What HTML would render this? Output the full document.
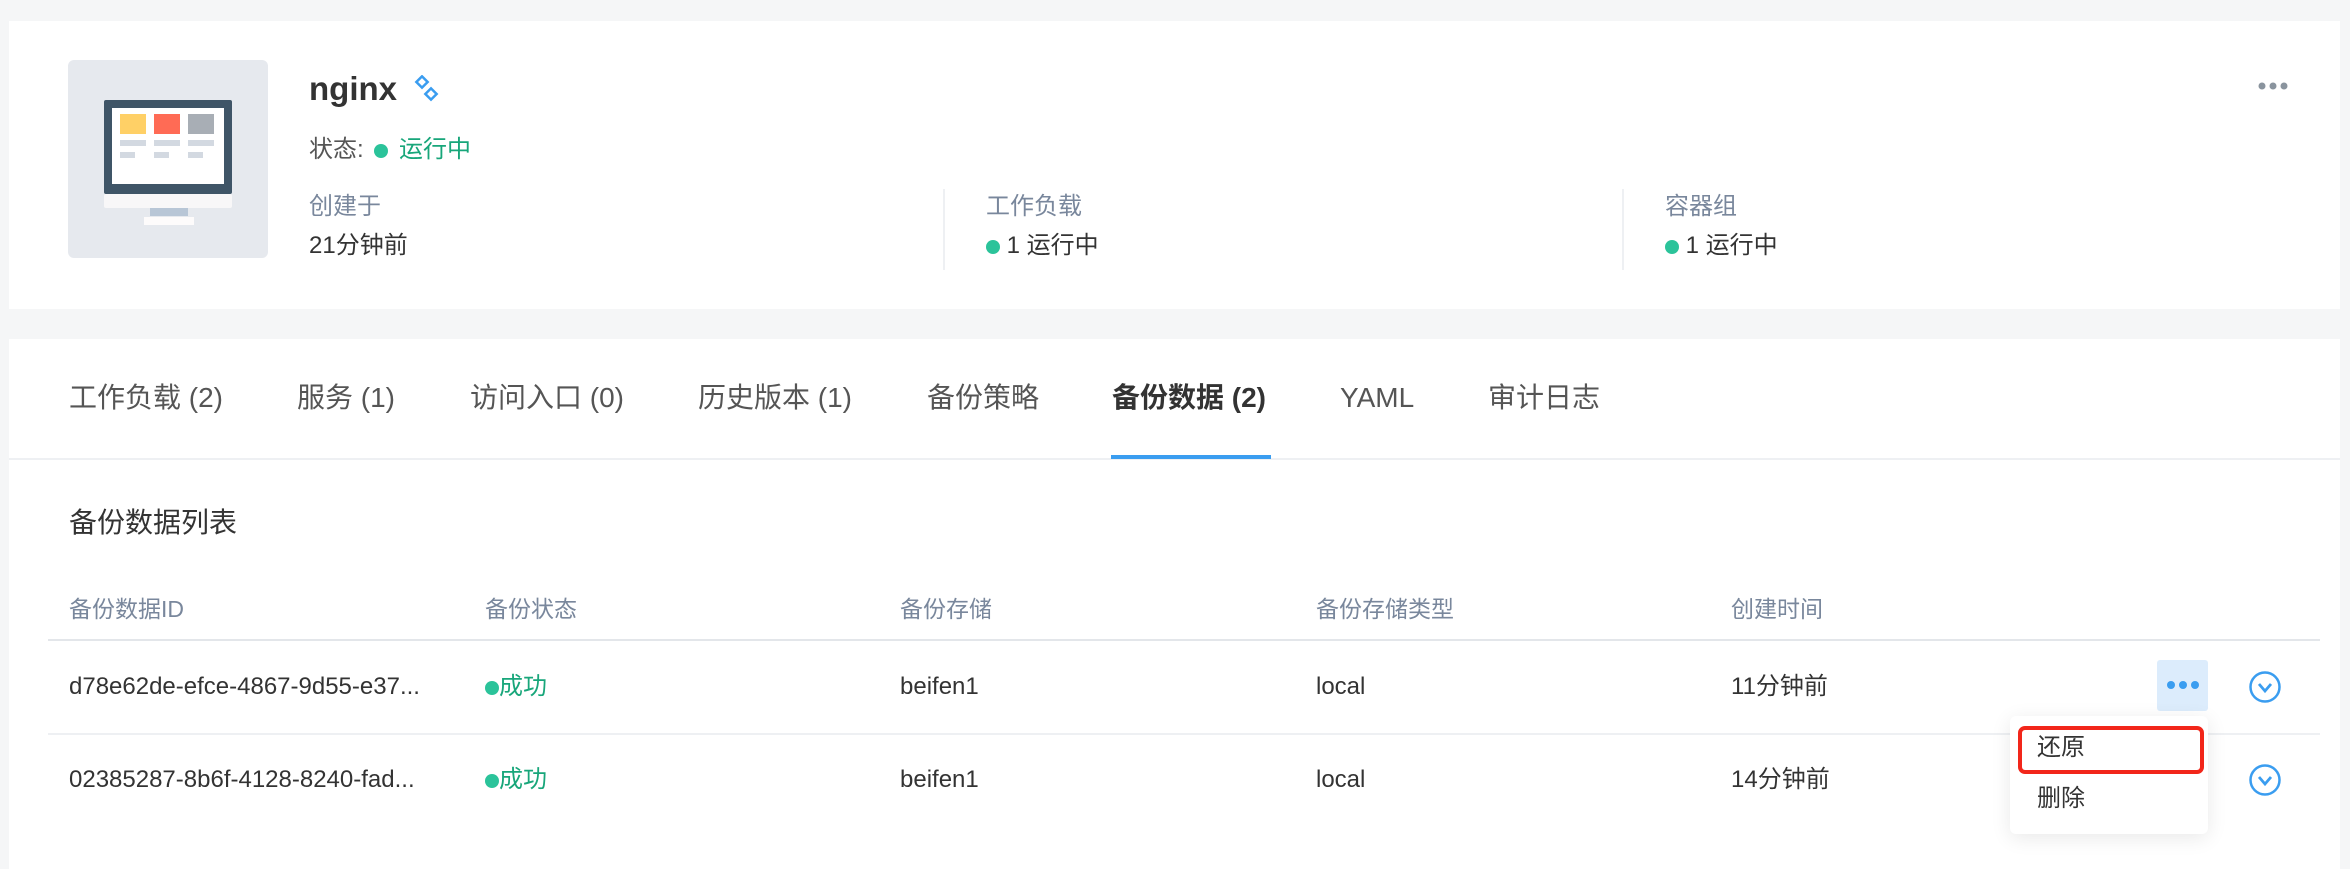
<!DOCTYPE html>
<html><head><meta charset="utf-8"><style>
*{margin:0;padding:0;box-sizing:border-box}
body{width:2350px;height:858px;background:#f5f6f7;font-family:"Liberation Sans","Noto Sans CJK SC",sans-serif;color:#333;position:relative;overflow:hidden}
.a{position:absolute;white-space:nowrap}
.card{position:absolute;background:#fff}
.dot{display:inline-block;width:14px;height:14px;border-radius:50%;background:#2bc39a;vertical-align:middle}
.g{color:#79879c}
.t{font-size:24px;line-height:26px}
.tab{font-size:28px;line-height:34px;color:#555;top:381px}
.hd{font-size:23px;line-height:26px;color:#79879c;top:596px}
.r1{top:674px}.r2{top:767px}
</style></head><body>
<div class="card" style="left:9px;top:21px;width:2331px;height:288px"></div>
<div class="card" style="left:9px;top:339px;width:2331px;height:530px"></div>

<div class="a" style="left:68px;top:60px;width:200px;height:198px;background:#e6e9ee;border-radius:6px"></div>
<svg class="a" style="left:102px;top:98px" width="132" height="128" viewBox="0 0 132 128">
<rect x="2" y="2" width="128" height="94" fill="#3f5567" rx="2"/>
<rect x="10" y="10" width="112" height="76" fill="#fff"/>
<rect x="18" y="16" width="26" height="20" fill="#ffd066"/>
<rect x="52" y="16" width="26" height="20" fill="#ff6b55"/>
<rect x="86" y="16" width="26" height="20" fill="#a8aeb5"/>
<rect x="18" y="42" width="26" height="6" fill="#d3d9e1"/><rect x="52" y="42" width="26" height="6" fill="#d3d9e1"/><rect x="86" y="42" width="26" height="6" fill="#d3d9e1"/>
<rect x="18" y="54" width="15" height="6" fill="#d3d9e1"/><rect x="52" y="54" width="15" height="6" fill="#d3d9e1"/><rect x="86" y="54" width="15" height="6" fill="#d3d9e1"/>
<rect x="2" y="96" width="128" height="14" fill="#f8f7f8" rx="2"/>
<rect x="48" y="110" width="38" height="8" fill="#b8c6d6"/>
<rect x="42" y="119" width="50" height="8" fill="#fdfbfb"/>
</svg>

<div class="a" style="left:309px;top:70px;font-size:33px;font-weight:bold;color:#333">nginx</div>
<svg class="a" style="left:414px;top:75px" width="26" height="28" viewBox="0 0 26 28" fill="none" stroke="#3a9df0" stroke-width="2.5"><rect x="4" y="3" width="8" height="8" transform="rotate(45 8 7)"/><rect x="13" y="15" width="8" height="8" transform="rotate(45 17 19)"/></svg>
<div class="a t" style="left:309px;top:137px;color:#555">状态: <span class="dot" style="margin:0 4px 0 4px"></span> <span style="color:#18a67a">运行中</span></div>

<div class="a t g" style="left:309px;top:194px">创建于</div>
<div class="a t" style="left:309px;top:233px">21分钟前</div>
<div class="a" style="left:943px;top:189px;width:2px;height:81px;background:#eef0f3"></div>
<div class="a t g" style="left:986px;top:194px">工作负载</div>
<div class="a t" style="left:986px;top:233px"><span class="dot"></span> 1 运行中</div>
<div class="a" style="left:1622px;top:189px;width:2px;height:81px;background:#eef0f3"></div>
<div class="a t g" style="left:1665px;top:194px">容器组</div>
<div class="a t" style="left:1665px;top:233px"><span class="dot"></span> 1 运行中</div>
<svg class="a" style="left:2258px;top:81px" width="32" height="10"><circle cx="4" cy="5" r="3.5" fill="#8a949e"/><circle cx="15" cy="5" r="3.5" fill="#8a949e"/><circle cx="26" cy="5" r="3.5" fill="#8a949e"/></svg>

<div class="a tab" style="left:69px">工作负载 (2)</div>
<div class="a tab" style="left:297px">服务 (1)</div>
<div class="a tab" style="left:470px">访问入口 (0)</div>
<div class="a tab" style="left:698px">历史版本 (1)</div>
<div class="a tab" style="left:927px">备份策略</div>
<div class="a tab" style="left:1112px;color:#333;font-weight:bold">备份数据 (2)</div>
<div class="a tab" style="left:1340px">YAML</div>
<div class="a tab" style="left:1488px">审计日志</div>
<div class="a" style="left:9px;top:458px;width:2331px;height:2px;background:#eef0f3"></div>
<div class="a" style="left:1111px;top:455px;width:160px;height:4px;background:#3a9df0"></div>

<div class="a" style="left:69px;top:506px;font-size:28px;line-height:34px;color:#333">备份数据列表</div>

<div class="a hd" style="left:69px">备份数据ID</div>
<div class="a hd" style="left:485px">备份状态</div>
<div class="a hd" style="left:900px">备份存储</div>
<div class="a hd" style="left:1316px">备份存储类型</div>
<div class="a hd" style="left:1731px">创建时间</div>
<div class="a" style="left:48px;top:639px;width:2272px;height:2px;background:#e3e6ea"></div>

<div class="a t r1" style="left:69px">d78e62de-efce-4867-9d55-e37...</div>
<div class="a t r1" style="left:485px;color:#18a67a"><span class="dot"></span>成功</div>
<div class="a t r1" style="left:900px">beifen1</div>
<div class="a t r1" style="left:1316px">local</div>
<div class="a t r1" style="left:1731px">11分钟前</div>
<div class="a" style="left:48px;top:733px;width:2272px;height:2px;background:#eef0f3"></div>
<div class="a t r2" style="left:69px">02385287-8b6f-4128-8240-fad...</div>
<div class="a t r2" style="left:485px;color:#18a67a"><span class="dot"></span>成功</div>
<div class="a t r2" style="left:900px">beifen1</div>
<div class="a t r2" style="left:1316px">local</div>
<div class="a t r2" style="left:1731px">14分钟前</div>

<div class="a" style="left:2157px;top:660px;width:51px;height:51px;background:#dcecfc;border-radius:3px"></div>
<svg class="a" style="left:2166px;top:680px" width="34" height="10"><circle cx="5" cy="5" r="4" fill="#3a9df0"/><circle cx="17" cy="5" r="4" fill="#3a9df0"/><circle cx="29" cy="5" r="4" fill="#3a9df0"/></svg>
<svg class="a" style="left:2248px;top:670px" width="34" height="34"><circle cx="17" cy="17" r="14.5" fill="none" stroke="#3a9df0" stroke-width="2.5"/><path d="M11 14l6 7 6-7" fill="none" stroke="#3a9df0" stroke-width="2.8"/></svg>
<svg class="a" style="left:2248px;top:763px" width="34" height="34"><circle cx="17" cy="17" r="14.5" fill="none" stroke="#3a9df0" stroke-width="2.5"/><path d="M11 14l6 7 6-7" fill="none" stroke="#3a9df0" stroke-width="2.8"/></svg>

<div class="a" style="left:2010px;top:716px;width:198px;height:118px;background:#fff;border-radius:6px;box-shadow:0 4px 20px rgba(0,0,0,.09)"></div>
<div class="a" style="left:2018px;top:726px;width:186px;height:48px;border:4px solid #f2261a;border-radius:7px"></div>
<div class="a t" style="left:2037px;top:735px">还原</div>
<div class="a t" style="left:2037px;top:786px">删除</div>
</body></html>
